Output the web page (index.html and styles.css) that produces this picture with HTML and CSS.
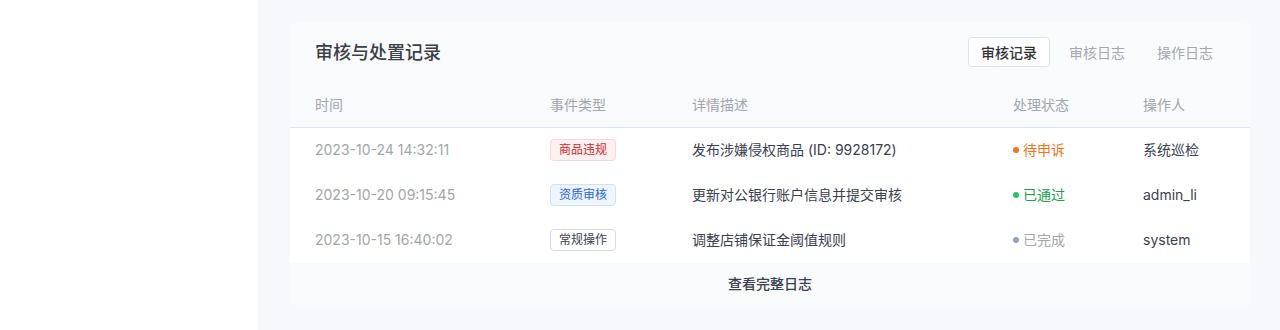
FILE: index.html
```html
<!DOCTYPE html>
<html lang="zh-CN">
<head>
  <meta charset="UTF-8">
  <title>审核与处置记录</title>
  <link rel="stylesheet" href="styles.css">
</head>
<body>

<div class="layout">
  <aside class="sidebar"></aside>

  <main class="main">
    <section class="record-card">
      <div class="record-header">
        <h2 class="record-title">审核与处置记录</h2>
        <div class="tabs">
          <button class="tab active">审核记录</button>
          <button class="tab">审核日志</button>
          <button class="tab">操作日志</button>
        </div>
      </div>

      <div class="record-table">
        <div class="row head">
          <div>时间</div>
          <div>事件类型</div>
          <div>详情描述</div>
          <div>处理状态</div>
          <div>操作人</div>
        </div>

        <div class="row">
          <div class="time">2023-10-24 14:32:11</div>
          <div><span class="tag tag-red">商品违规</span></div>
          <div class="desc">发布涉嫌侵权商品 (ID: 9928172)</div>
          <div class="status orange"><i class="dot"></i>待申诉</div>
          <div class="user">系统巡检</div>
        </div>

        <div class="row">
          <div class="time">2023-10-20 09:15:45</div>
          <div><span class="tag tag-blue">资质审核</span></div>
          <div class="desc">更新对公银行账户信息并提交审核</div>
          <div class="status green"><i class="dot"></i>已通过</div>
          <div class="user">admin_li</div>
        </div>

        <div class="row">
          <div class="time">2023-10-15 16:40:02</div>
          <div><span class="tag tag-plain">常规操作</span></div>
          <div class="desc">调整店铺保证金阈值规则</div>
          <div class="status gray"><i class="dot"></i>已完成</div>
          <div class="user">system</div>
        </div>
      </div>

      <div class="record-footer">查看完整日志</div>
    </section>
  </main>
</div>

</body>
</html>
```

FILE: styles.css
```css
* {
  margin: 0;
  padding: 0;
  box-sizing: border-box;
}

body {
  font-family: Inter, "Noto Sans CJK SC", sans-serif;
  font-size: 14px;
  line-height: 20px;
  color: #374151;
  background-color: #fff;
  height: 330px;
  overflow: hidden;
}

.layout {
  display: flex;
  height: 330px;
}

.sidebar {
  width: 258px;
  background-color: #fff;
}

.main {
  flex: 1;
  background-color: #f7f8fc;
  padding: 22px 30px 0 32px;
}

/* Card */
.record-card {
  width: 960px;
  background-color: #f9fafb;
  border-radius: 8px;
  overflow: hidden;
}

.record-header {
  height: 62px;
  display: flex;
  align-items: center;
  justify-content: space-between;
  padding: 0 24px 0 25px;
}

.record-title {
  font-size: 18px;
  line-height: 24px;
  font-weight: 500;
  color: #3a3f47;
  margin-top: -1px;
}

.tabs {
  display: flex;
  gap: 6px;
  margin-top: -2px;
}

.tab {
  font-family: inherit;
  font-size: 14px;
  height: 30px;
  padding: 0 12px;
  border: 1px solid transparent;
  border-radius: 4px;
  background: none;
  color: #a3a8b0;
  cursor: pointer;
}

.tab.active {
  background-color: #fff;
  border-color: #d9e4f2;
  color: #333;
  font-weight: 500;
}

/* Table */
.row {
  display: grid;
  grid-template-columns: 236px 142px 321px 130px 131px;
  align-items: center;
  height: 45px;
  background-color: #fff;
}

.row > div {
  padding-left: 24px;
  white-space: nowrap;
  margin-top: -2px;
}

.row > div:first-child {
  padding-left: 25px;
}

.row .time {
  padding-left: 26px;
  color: #a1a6ae;
}

.row.head {
  height: 44px;
  background-color: #f9fafb;
  border-bottom: 1px solid #dbe7f7;
  color: #a1a6ae;
}

.desc,
.user {
  color: #374151;
}

.tag {
  display: inline-block;
  font-size: 12px;
  line-height: 20px;
  padding: 0 8px;
  border: 1px solid;
  border-radius: 4px;
}

.tag-red {
  background-color: #fef1f1;
  border-color: #fdd5d5;
  color: #dc2626;
}

.tag-blue {
  background-color: #eef5ff;
  border-color: #cfe0fb;
  color: #2563eb;
}

.tag-plain {
  background-color: #fff;
  border-color: #d5ddea;
  color: #374151;
}

.status {
  display: flex;
  align-items: center;
  gap: 4px;
}

.dot {
  width: 6px;
  height: 6px;
  border-radius: 50%;
  background-color: currentColor;
}

.status.orange { color: #f97316; }
.status.green { color: #16a34a; }
.status.green .dot { background-color: #22c55e; }
.status.gray { color: #a1a6ae; }
.status.gray .dot { background-color: #94a3b8; }

/* Footer */
.record-footer {
  height: 44px;
  display: flex;
  align-items: center;
  justify-content: center;
  font-weight: 500;
  color: #374151;
  background-color: #f9fafb;
  padding-bottom: 2px;
}
```
